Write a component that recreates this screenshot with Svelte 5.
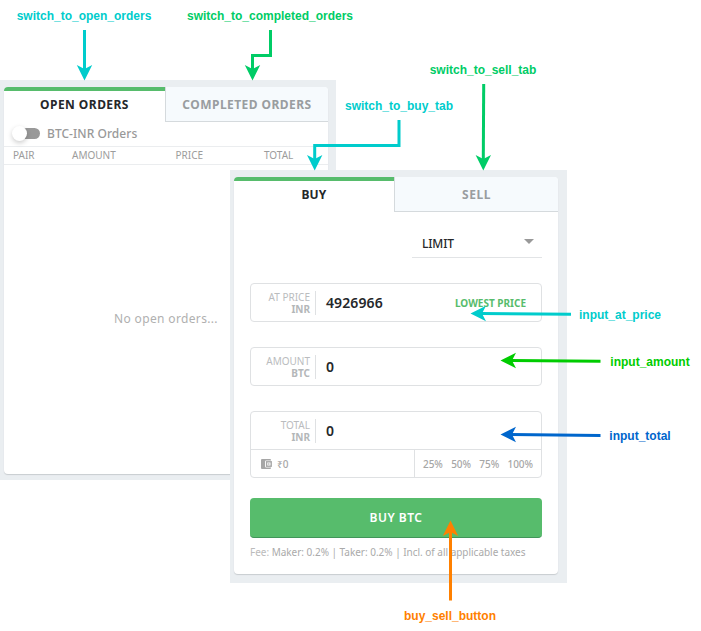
<script>
  const labels = [
    { text: 'switch_to_open_orders', x: 84, y: 20, color: '#00cccc' },
    { text: 'switch_to_completed_orders', x: 270, y: 20, color: '#00cc66' },
    { text: 'switch_to_sell_tab', x: 483, y: 74, color: '#00cc66' },
    { text: 'switch_to_buy_tab', x: 399, y: 110, color: '#00cccc' },
    { text: 'input_at_price', x: 620, y: 319, color: '#00cccc' },
    { text: 'input_amount', x: 650, y: 366, color: '#00cc00' },
    { text: 'input_total', x: 640, y: 440, color: '#0066cc' },
    { text: 'buy_sell_button', x: 450, y: 620, color: '#ff8000' }
  ];
  const arrows = [
    { line: 'M84.5 30V70', tip: [84.5, 80.5], turn: 0, color: '#00cccc' },
    { line: 'M270.5 30V55.5H252.5V70', tip: [252.5, 80.5], turn: 0, color: '#00cc66' },
    { line: 'M399 120V145.5H314.7V160', tip: [314.7, 170.5], turn: 0, color: '#00cccc' },
    { line: 'M483.7 84L483.3 160', tip: [483.3, 170.5], turn: 0, color: '#00cc66' },
    { line: 'M571 314.3L481 313.6', tip: [470.5, 313.5], turn: 90, color: '#00cccc' },
    { line: 'M600.5 361.2L511 360.6', tip: [500.5, 360.5], turn: 90, color: '#00cc00' },
    { line: 'M600.5 435.4L511 434.6', tip: [500.5, 434.5], turn: 90, color: '#0066cc' },
    { line: 'M450.5 600.5V531', tip: [450.5, 520.5], turn: 180, color: '#ff8000' }
  ];
  const shares = ['25%', '50%', '75%', '100%'];
</script>

<main>
  <section class="panel orders">
    <div class="card">
      <div class="tabs">
        <div class="tab active">OPEN ORDERS</div>
        <div class="tab second completed">COMPLETED ORDERS</div>
      </div>
      <div class="filter">
        <span class="switch"><i></i></span>
        <span class="filter-name">BTC-INR Orders</span>
      </div>
      <div class="columns">
        <span>PAIR</span><span>AMOUNT</span><span>PRICE</span><span>TOTAL</span>
      </div>
      <div class="empty">No open orders...</div>
    </div>
  </section>

  <section class="panel trade">
    <div class="card">
      <div class="tabs">
        <div class="tab active buy">BUY</div>
        <div class="tab second">SELL</div>
      </div>
      <div class="form">
        <div class="select"><span>LIMIT</span><i></i></div>
        <div class="field">
          <div class="row">
            <div class="name">AT PRICE<b>INR</b></div>
            <div class="value">4926966</div>
            <div class="lowest">LOWEST PRICE</div>
          </div>
        </div>
        <div class="field">
          <div class="row">
            <div class="name">AMOUNT<b>BTC</b></div>
            <div class="value">0</div>
          </div>
        </div>
        <div class="field total">
          <div class="row">
            <div class="name">TOTAL<b>INR</b></div>
            <div class="value">0</div>
          </div>
          <div class="wallet">
            <div class="balance">
              <svg width="11" height="10" viewBox="0 0 11 10">
                <path fill="#a6a6a6" d="M1 0H9Q10 0 10 1V1.5H5.2Q4 1.5 4 2.7V7.3Q4 8.5 5.2 8.5H10V9Q10 10 9 10H1Q0 10 0 9V1Q0 0 1 0Z" />
                <rect x="5.6" y="2.8" width="4.6" height="4.4" fill="none" stroke="#a6a6a6" stroke-width="1.4" />
                <circle cx="7.8" cy="5" r=".8" fill="#a6a6a6" />
              </svg>
              <span>₹0</span>
            </div>
            <div class="shares">
              {#each shares as share}<span>{share}</span>{/each}
            </div>
          </div>
        </div>
        <button>BUY BTC</button>
        <div class="fee"><span>Fee:</span> Maker: 0.2% | Taker: 0.2% | Incl. of all applicable taxes</div>
      </div>
    </div>
  </section>

  <svg class="notes" width="701" height="631" viewBox="0 0 701 631">
    {#each arrows as a}
      <path d={a.line} fill="none" stroke={a.color} stroke-width="3" />
      <path d="M0 0L-7.7 -15.5L0 -11.5L7.7 -15.5Z" fill={a.color} transform="translate({a.tip[0]} {a.tip[1]}) rotate({a.turn})" />
    {/each}
    {#each labels as l}
      <text x={l.x} y={l.y} fill={l.color}>{l.text}</text>
    {/each}
  </svg>
</main>

<style>
  :global(body) { margin: 0; background: #fff; }
  main {
    position: relative; width: 701px; height: 631px; overflow: hidden;
    background: #fff; font-family: "Noto Sans", sans-serif; color: #25272a;
  }
  main * { box-sizing: border-box; }
  .panel { position: absolute; background: #eaeef1; padding: 7px 8px 0 4px; }
  .orders { left: 0; top: 80px; width: 336px; height: 400px; }
  .trade { left: 230px; top: 170px; width: 337px; height: 413px; padding-right: 9px; }
  .card { background: #fff; border-radius: 4px; overflow: hidden; box-shadow: 0 1px 1px #c8ccd0; height: 387px; }
  .trade .card { height: 397px; }
  .tabs { display: flex; height: 35px; font-size: 12px; font-weight: 700; letter-spacing: .6px; line-height: 35px; text-align: center; }
  .tab.active { width: 161px; border-top: 4px solid #57bc6c; line-height: 27px; letter-spacing: .45px; }
  .tab.buy { width: 160px; letter-spacing: .2px; }
  .tab.second { flex: 1; background: #f6fafd; border-left: 1px solid #d5dadd; border-bottom: 1px solid #d5dadd; color: #999da0; }
  .tab.completed { letter-spacing: .45px; }
  .filter { display: flex; align-items: center; height: 24px; padding-left: 10px; color: #999; }
  .switch { width: 26px; height: 11px; border-radius: 6px; background: #999; margin-right: 7px; position: relative; top: -1px; }
  .switch i { position: absolute; left: -2px; top: -2px; width: 15px; height: 15px; border-radius: 50%; background: #fff; box-shadow: 0 2px 5px #0003; }
  .filter-name { font-size: 12px; font-weight: 500; letter-spacing: .05px; padding-bottom: 2px; }
  .columns { display: grid; grid-template-columns: 59px 103.5px 88.5px 1fr; padding-left: 9px; height: 19px; border-top: 1px solid #ebedef; border-bottom: 1px solid #ebedef; font-size: 10px; line-height: 17px; color: #9c9c9c; }
  .empty { padding-top: 145px; width: 324px; text-align: center; font-size: 12px; line-height: 17px; letter-spacing: .35px; color: #b0b0b0; }
  .form { display: flex; flex-direction: column; padding: 17px 16px 0; }
  .select { align-self: flex-end; width: 130px; height: 29px; display: flex; justify-content: space-between; padding: 0 8px 0 10px; border-bottom: 1px solid #e2e4e6; font-size: 12px; font-weight: 500; line-height: 29px; letter-spacing: -.15px; }
  .select i { width: 0; height: 0; margin-top: 10px; border: 5px solid transparent; border-top-color: #999; border-bottom: 0; }
  .field { border: 1px solid #dfe1e3; border-radius: 4px; height: 39px; margin-top: 25px; }
  .row { display: flex; align-items: center; height: 37px; }
  .name { width: 65px; height: 24px; padding-right: 5px; border-right: 1px solid #dfe1e3; text-align: right; font-size: 10px; line-height: 12px; color: #babcbe; }
  .name b { display: block; font-weight: 700; color: #b4b7b9; }
  .value { flex: 1; padding-left: 10px; font-size: 14px; font-weight: 600; letter-spacing: .1px; }
  .lowest { padding-right: 15px; font-size: 10px; font-weight: 700; color: #57bc6c; }
  .total { height: 67px; }
  .wallet { display: flex; height: 28px; border-top: 1px solid #dfe1e3; font-size: 10px; font-weight: 500; color: #a6a6a6; line-height: 28px; }
  .balance { width: 164px; display: flex; align-items: center; gap: 5px; padding-left: 10px; border-right: 1px solid #dfe1e3; }
  .shares { flex: 1; display: flex; justify-content: space-between; padding: 0 8px; letter-spacing: -.05px; }
  button { height: 40px; margin-top: 20px; padding: 1px 0 0; border: 0; border-bottom: 1px solid #41955a; border-radius: 4px; background: #57bc6c; color: #fff; font: 600 12px/38px "Noto Sans", sans-serif; letter-spacing: .5px; }
  .fee { margin-top: 7px; font-size: 10px; line-height: 14px; letter-spacing: -.02px; color: #aaa; white-space: nowrap; }
  .fee span { color: #bbb; }
  .notes { position: absolute; left: 0; top: 0; }
  .notes text { font: bold 12px "Liberation Sans", Arial, sans-serif; text-anchor: middle; }
</style>
